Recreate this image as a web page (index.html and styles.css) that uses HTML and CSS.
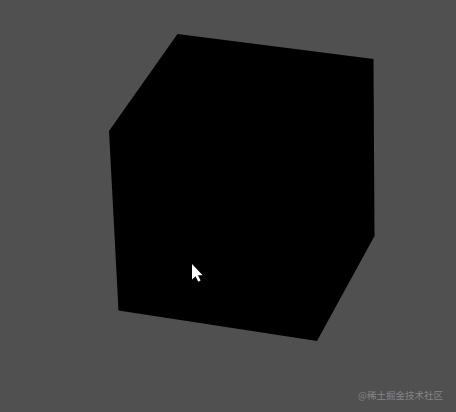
FILE: index.html
```html
<!DOCTYPE html>
<html lang="zh">
<head>
<meta charset="utf-8">
<title>Cube</title>
<link rel="stylesheet" href="styles.css">
</head>
<body>
<main class="scene">
  <svg class="canvas" viewBox="0 0 456 412" width="456" height="412" aria-hidden="true">
    <polygon class="cube" points="177.5,34 373.5,59 374.5,236 317,341 118.5,310.5 109,131"/>
    <path class="cursor" d="M192 264V279.5L195.6 276.2L198.2 281.8L200.6 280.6L198 275.2H202.6Z"/>
  </svg>
  <span class="watermark">@稀土掘金技术社区</span>
</main>
</body>
</html>
```
FILE: styles.css
```css
html, body {
  margin: 0;
  padding: 0;
  background: #505050;
}
.scene {
  position: relative;
  width: 456px;
  height: 412px;
  overflow: hidden;
  background: #505050;
}
.canvas {
  display: block;
}
.cube {
  fill: #000;
}
.cursor {
  fill: #fff;
}
.watermark {
  position: absolute;
  right: 13px;
  bottom: 11px;
  font-family: "Noto Sans CJK SC", "Noto Sans", sans-serif;
  font-size: 9.5px;
  line-height: 12px;
  color: #858585;
  white-space: nowrap;
}
```
